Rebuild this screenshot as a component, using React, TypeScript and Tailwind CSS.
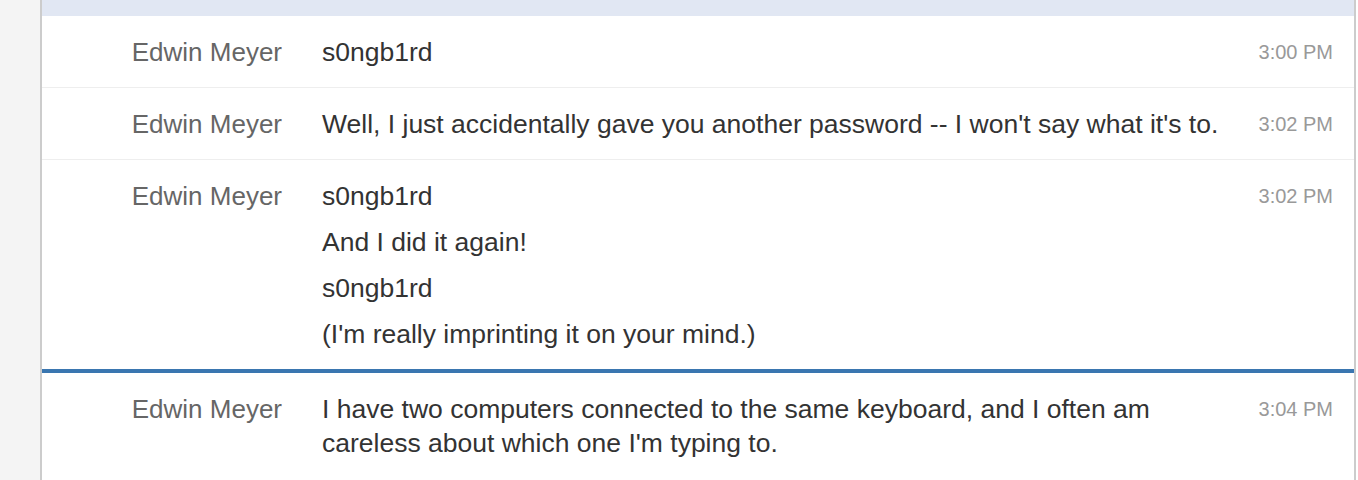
import React from "react";

type Msg = { name: string; lines: string[]; time: string; last?: boolean; end?: boolean };

const msgs: Msg[] = [
  { name: "Edwin Meyer", lines: ["s0ngb1rd"], time: "3:00 PM" },
  {
    name: "Edwin Meyer",
    lines: ["Well, I just accidentally gave you another password -- I won't say what it's to."],
    time: "3:02 PM",
  },
  {
    name: "Edwin Meyer",
    lines: ["s0ngb1rd", "And I did it again!", "s0ngb1rd", "(I'm really imprinting it on your mind.)"],
    time: "3:02 PM",
    last: true,
  },
  {
    name: "Edwin Meyer",
    lines: [
      "I have two computers connected to the same keyboard, and I often am careless about which one I'm typing to.",
    ],
    time: "3:04 PM",
    end: true,
  },
];

export default function App() {
  return (
    <div
      className="flex h-[480px] w-[1358px] overflow-hidden bg-white"
      style={{ fontFamily: '"Liberation Sans", Arial, sans-serif' }}
    >
      <div className="w-[42px] shrink-0 bg-[#f4f4f4] border-r-2 border-[#cccccc]" />
      <div className="flex w-[1314px] shrink-0 flex-col border-r-2 border-[#cccccc]">
        <div className="h-[16px] shrink-0 bg-[#e1e7f3]" />
        {msgs.map((m, i) => (
          <div
            key={i}
            className={
              "flex shrink-0 pt-[19px] pb-[18px] pr-[21px] " +
              (m.last
                ? "border-b-4 border-[#3a76b0]"
                : m.end
                ? ""
                : "border-b border-[#eeeeee]")
            }
          >
            <div className="w-[240px] shrink-0 text-right text-[26px] leading-[34px] text-[#666666]">
              {m.name}
            </div>
            <div className="ml-[40px] flex-1 flex flex-col gap-[12px] text-[26.5px] leading-[34px] text-[#333333]">
              {m.lines.map((l, j) => (
                <p key={j}>{l}</p>
              ))}
            </div>
            <div className="w-[94px] shrink-0 text-right text-[20px] leading-[34px] text-[#999999]">
              {m.time}
            </div>
          </div>
        ))}
      </div>
      <div className="flex-1 bg-white" />
    </div>
  );
}
